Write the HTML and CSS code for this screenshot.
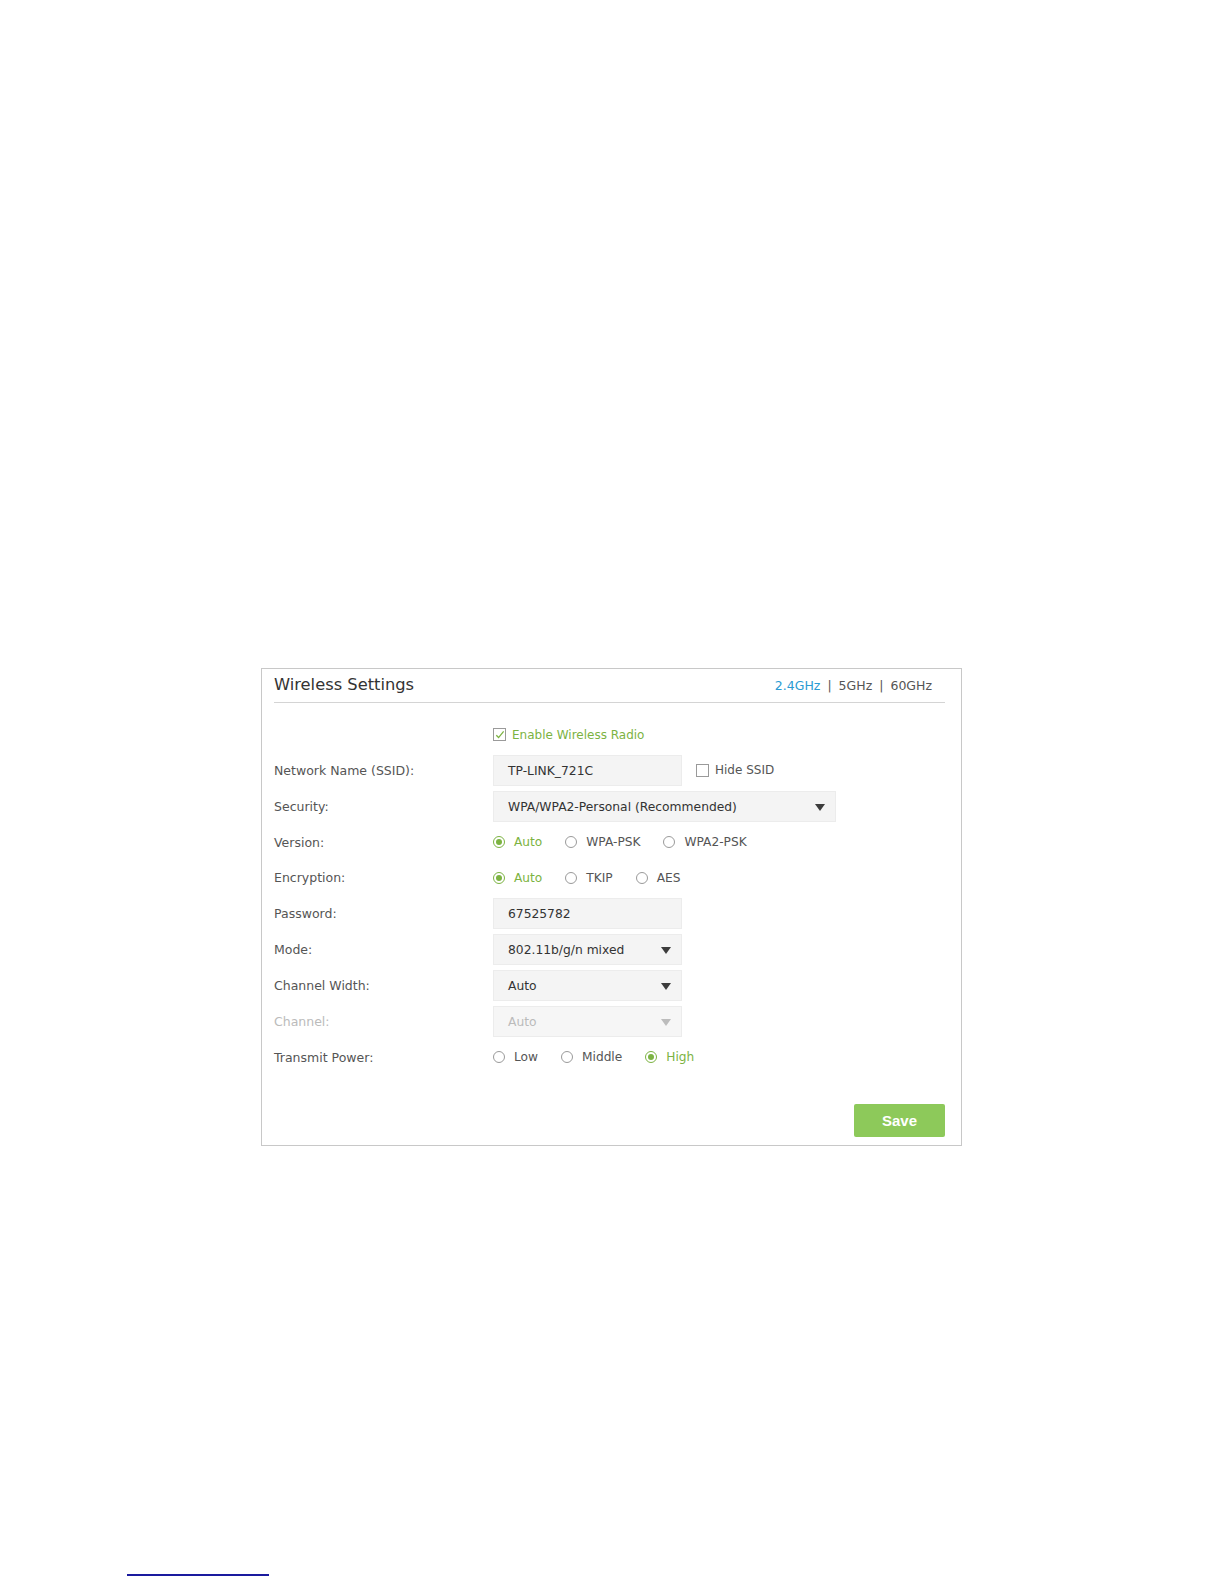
FILE: index.html
```html
<!DOCTYPE html>
<html>
<head>
    <meta charset="UTF-8">
    <title>Wireless Settings</title>
    <link rel="stylesheet" href="styles.css">
</head>
<body>
    <div class="page">
        <section class="panel">
            <header class="panel-head">
                <h2>Wireless Settings</h2>
                <div class="bands">
                    <a class="band active">2.4GHz</a>
                    <span class="sep">|</span>
                    <a class="band">5GHz</a>
                    <span class="sep">|</span>
                    <a class="band">60GHz</a>
                </div>
            </header>

            <div class="form">
                <div class="row">
                    <span class="label"></span>
                    <label class="check on">
                        <span class="box">
                            <svg viewBox="0 0 12 12" width="12" height="12"><path d="M2.5 6.2 L5 8.8 L10.5 2" fill="none" stroke="#7cb342" stroke-width="1.4"/></svg>
                        </span>
                        Enable Wireless Radio
                    </label>
                </div>

                <div class="row">
                    <span class="label">Network Name (SSID):</span>
                    <div class="controls">
                        <div class="field">TP-LINK_721C</div>
                        <label class="check"><span class="box"></span>Hide SSID</label>
                    </div>
                </div>

                <div class="row">
                    <span class="label">Security:</span>
                    <div class="field select wide">WPA/WPA2-Personal (Recommended)</div>
                </div>

                <div class="row">
                    <span class="label">Version:</span>
                    <div class="options">
                        <label class="opt on"><span class="radio"></span>Auto</label>
                        <label class="opt"><span class="radio"></span>WPA-PSK</label>
                        <label class="opt"><span class="radio"></span>WPA2-PSK</label>
                    </div>
                </div>

                <div class="row">
                    <span class="label">Encryption:</span>
                    <div class="options">
                        <label class="opt on"><span class="radio"></span>Auto</label>
                        <label class="opt"><span class="radio"></span>TKIP</label>
                        <label class="opt"><span class="radio"></span>AES</label>
                    </div>
                </div>

                <div class="row">
                    <span class="label">Password:</span>
                    <div class="field">67525782</div>
                </div>

                <div class="row">
                    <span class="label">Mode:</span>
                    <div class="field select">802.11b/g/n mixed</div>
                </div>

                <div class="row">
                    <span class="label">Channel Width:</span>
                    <div class="field select">Auto</div>
                </div>

                <div class="row disabled">
                    <span class="label">Channel:</span>
                    <div class="field select">Auto</div>
                </div>

                <div class="row">
                    <span class="label">Transmit Power:</span>
                    <div class="options">
                        <label class="opt"><span class="radio"></span>Low</label>
                        <label class="opt"><span class="radio"></span>Middle</label>
                        <label class="opt on"><span class="radio"></span>High</label>
                    </div>
                </div>
            </div>

            <div class="actions">
                <button class="save">Save</button>
            </div>
        </section>

        <div class="footnote-rule"></div>
    </div>
</body>
</html>
```

FILE: styles.css
```css
body {
    margin: 0;
    background-color: #fff;
    font-family: 'DejaVu Sans', Verdana, sans-serif;
    font-size: 12.5px;
    color: #555;
}

.page {
    padding-top: 668px;
}

.panel {
    box-sizing: border-box;
    width: 701px;
    height: 478px;
    margin-left: 261px;
    border: 1px solid #c8c8c8;
    padding: 0 16px 0 12px;
    display: flex;
    flex-direction: column;
}

.panel-head {
    height: 33px;
    border-bottom: 1px solid #d4d4d4;
    display: flex;
    align-items: center;
    justify-content: space-between;
}

.panel-head h2 {
    margin: 0;
    font-size: 16.3px;
    font-weight: normal;
    color: #333;
    position: relative;
    top: -1px;
}

.bands {
    display: flex;
    align-items: center;
    padding-right: 13px;
    color: #555;
    font-size: 12.5px;
}

.band {
    color: #555;
}

.band.active {
    color: #2a9bd3;
}

.sep {
    margin: 0 7px;
    color: #555;
}

.form {
    display: flex;
    flex-direction: column;
    gap: 4.85px;
    padding-top: 16px;
}

.row {
    display: grid;
    grid-template-columns: 219px 1fr;
    align-items: center;
    height: 31px;
}

.label {
    color: #555;
}

.controls {
    display: flex;
    align-items: center;
}

.field {
    box-sizing: border-box;
    width: 189px;
    height: 31px;
    padding-left: 14px;
    line-height: 30px;
    background-color: #f4f4f4;
    border: 1px solid #ececec;
    color: #333;
    font-size: 12.3px;
    position: relative;
}

.field.wide {
    width: 343px;
}

.select::after {
    content: "";
    position: absolute;
    right: 10px;
    top: 12px;
    border-left: 5.5px solid transparent;
    border-right: 5.5px solid transparent;
    border-top: 7px solid #3c3c3c;
}

.disabled .label,
.disabled .field {
    color: #bbb;
}

.disabled .field {
    background-color: #f6f6f6;
}

.disabled .select::after {
    border-top-color: #bcbcbc;
}

.check {
    display: flex;
    align-items: center;
    font-size: 12px;
    color: #555;
}

.controls .check {
    margin-left: 14px;
}

.check.on {
    color: #7cb342;
}

.box {
    box-sizing: border-box;
    width: 13px;
    height: 13px;
    border: 1px solid #9a9a9a;
    background: #fff;
    margin-right: 6px;
    display: flex;
    align-items: center;
    justify-content: center;
}

.box svg {
    display: block;
}

.options {
    display: flex;
    align-items: center;
    font-size: 12.2px;
}

.opt {
    display: flex;
    align-items: center;
    margin-right: 23px;
    color: #555;
}

.opt.on {
    color: #7cb342;
}

.radio {
    box-sizing: border-box;
    width: 12px;
    height: 12px;
    border: 1px solid #9a9a9a;
    border-radius: 50%;
    margin-right: 9px;
    display: flex;
    align-items: center;
    justify-content: center;
}

.opt.on .radio {
    border-color: #7cb342;
}

.opt.on .radio::after {
    content: "";
    width: 6px;
    height: 6px;
    border-radius: 50%;
    background-color: #7cb342;
}

.actions {
    display: flex;
    justify-content: flex-end;
    margin-top: 31px;
}

.save {
    width: 91px;
    height: 33px;
    border: none;
    border-radius: 2px;
    background-color: #8dc95a;
    color: #fff;
    font-family: 'Liberation Sans', Arial, sans-serif;
    font-size: 15px;
    font-weight: bold;
}

.footnote-rule {
    width: 142px;
    margin: 428px 0 0 127px;
    border-top: 2px solid #1a1a9e;
}
```
